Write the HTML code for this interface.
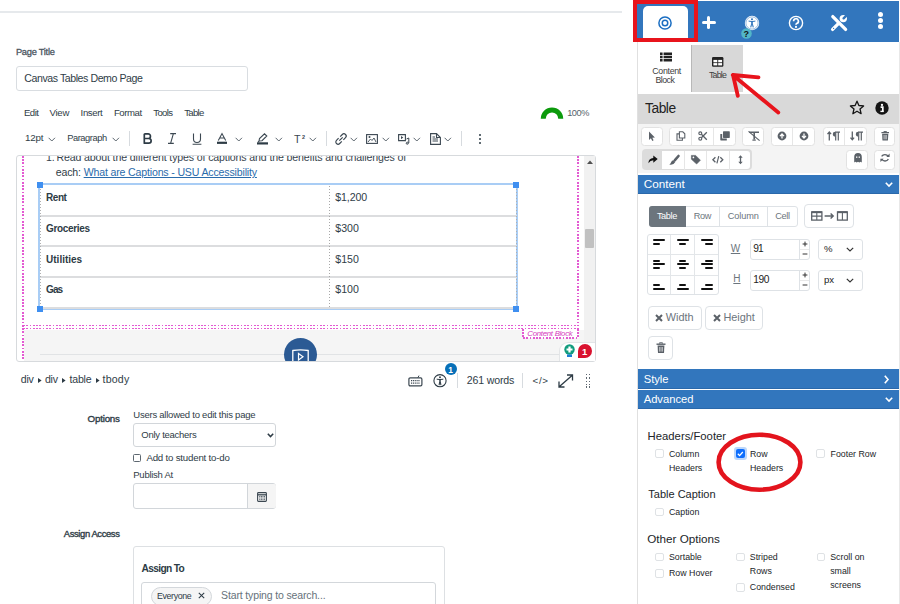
<!DOCTYPE html>
<html><head><meta charset="utf-8"><style>
html,body{margin:0;padding:0;}
body{width:900px;height:604px;position:relative;overflow:hidden;background:#fff;font-family:"Liberation Sans",sans-serif;}
.a{position:absolute;}
.t{position:absolute;white-space:nowrap;line-height:1;}
svg.a{overflow:visible;}
</style></head><body>
<div class="a" style="left:0px;top:11px;width:622.00px;height:2.00px;background:#e6e9ec"></div>
<div class="t" style="left:15.90px;top:48.00px;font-size:9.3px;color:#4b565f;font-weight:400;-webkit-text-stroke:0.3px #4b565f;letter-spacing:-0.262px;">Page Title</div>
<div class="a" style="left:15.5px;top:66.3px;width:232.50px;height:24.70px;border:1px solid #d9dde1;border-radius:3px;box-sizing:border-box"></div>
<div class="t" style="left:24.30px;top:73.00px;font-size:10.6px;color:#303d47;font-weight:400;;letter-spacing:-0.435px;">Canvas Tables Demo Page</div>
<div class="t" style="left:23.90px;top:108.00px;font-size:9.6px;color:#303d47;font-weight:400;;letter-spacing:-0.481px;">Edit</div>
<div class="t" style="left:49.40px;top:108.00px;font-size:9.6px;color:#303d47;font-weight:400;;letter-spacing:-0.212px;">View</div>
<div class="t" style="left:80.60px;top:108.00px;font-size:9.6px;color:#303d47;font-weight:400;;letter-spacing:-0.362px;">Insert</div>
<div class="t" style="left:113.90px;top:108.00px;font-size:9.6px;color:#303d47;font-weight:400;;letter-spacing:-0.441px;">Format</div>
<div class="t" style="left:153.20px;top:108.00px;font-size:9.6px;color:#303d47;font-weight:400;;letter-spacing:-0.603px;">Tools</div>
<div class="t" style="left:184.30px;top:108.00px;font-size:9.6px;color:#303d47;font-weight:400;;letter-spacing:-0.738px;">Table</div>
<svg class="a" style="left:540px;top:107.4px;" width="24" height="13" viewBox="0 0 24 13"><path d="M3.25 11.7 A8.75 8.75 0 0 1 20.75 11.7" fill="none" stroke="#0c9a0c" stroke-width="5"/></svg>
<div class="t" style="left:567.20px;top:109.00px;font-size:9.2px;color:#56616b;font-weight:400;;letter-spacing:-0.443px;">100%</div>
<div class="t" style="left:25.00px;top:133.00px;font-size:9.8px;color:#303d47;font-weight:400;;letter-spacing:-0.225px;">12pt</div>
<svg class="a" style="left:48px;top:136.5px;" width="8" height="5" viewBox="0 0 8 5"><path d="M0.6 0.8 L3.8 4 L7 0.8" fill="none" stroke="#5d6770" stroke-width="1"/></svg>
<div class="t" style="left:67.20px;top:134.00px;font-size:9.3px;color:#303d47;font-weight:400;;letter-spacing:-0.429px;">Paragraph</div>
<svg class="a" style="left:111.5px;top:136.5px;" width="8" height="5" viewBox="0 0 8 5"><path d="M0.6 0.8 L3.8 4 L7 0.8" fill="none" stroke="#5d6770" stroke-width="1"/></svg>
<div class="a" style="left:129px;top:131px;width:1.00px;height:15.00px;background:#d7dbdf"></div>
<svg class="a" style="left:142.5px;top:133px;" width="10" height="11" viewBox="0 0 10 11"><path d="M1.3 0.8 V10.2 H5.8 A2.35 2.35 0 0 0 5.8 5.5 H1.3 M1.3 0.8 H5.1 A2.35 2.35 0 0 1 5.1 5.5" fill="none" stroke="#2d3b45" stroke-width="1.7" stroke-linejoin="round"/></svg>
<svg class="a" style="left:167px;top:133px;" width="10" height="11" viewBox="0 0 10 11"><path d="M3.2 0.6 H9 M1 10.4 H6.8 M6.4 0.6 L3.6 10.4" fill="none" stroke="#3c4852" stroke-width="1.1"/></svg>
<svg class="a" style="left:192px;top:132.5px;" width="10" height="12" viewBox="0 0 10 12"><path d="M1.5 0.5 V6 A3.5 3.5 0 0 0 8.5 6 V0.5 M0.6 11.3 H9.4" fill="none" stroke="#3c4852" stroke-width="1.1"/></svg>
<svg class="a" style="left:216.5px;top:133px;" width="10" height="11" viewBox="0 0 10 11"><path d="M1.3 7.5 L5 0.6 L8.7 7.5 M2.6 5 H7.4" fill="none" stroke="#3c4852" stroke-width="1.1"/><rect x="0" y="8.7" width="10" height="2.2" fill="#2d3b45"/></svg>
<svg class="a" style="left:235px;top:136.5px;" width="8" height="5" viewBox="0 0 8 5"><path d="M0.6 0.8 L3.8 4 L7 0.8" fill="none" stroke="#5d6770" stroke-width="1"/></svg>
<svg class="a" style="left:257px;top:132.5px;" width="11" height="12" viewBox="0 0 11 12"><path d="M2 8 L2.5 5.5 L7.5 0.8 L9.8 3 L5 7.7 Z M1 9.2 L2.2 8" fill="none" stroke="#3c4852" stroke-width="1.1"/><rect x="0" y="9.3" width="11" height="2.2" fill="#2d3b45"/></svg>
<svg class="a" style="left:275px;top:136.5px;" width="8" height="5" viewBox="0 0 8 5"><path d="M0.6 0.8 L3.8 4 L7 0.8" fill="none" stroke="#5d6770" stroke-width="1"/></svg>
<div class="t" style="left:293.90px;top:134.00px;font-size:10.8px;color:#3c4852;font-weight:400;">T</div>
<div class="t" style="left:302.00px;top:135.00px;font-size:5.5px;color:#3c4852;font-weight:700;">2</div>
<svg class="a" style="left:308.5px;top:136.5px;" width="8" height="5" viewBox="0 0 8 5"><path d="M0.6 0.8 L3.8 4 L7 0.8" fill="none" stroke="#5d6770" stroke-width="1"/></svg>
<div class="a" style="left:326px;top:131px;width:1.00px;height:15.00px;background:#d7dbdf"></div>
<svg class="a" style="left:334.5px;top:132.5px;" width="12" height="12" viewBox="0 0 12 12"><path d="M5.2 3.6 L7.3 1.5 A2.2 2.2 0 0 1 10.5 4.7 L8.4 6.8 M6.8 8.4 L4.7 10.5 A2.2 2.2 0 0 1 1.5 7.3 L3.6 5.2 M4.3 7.7 L7.7 4.3" fill="none" stroke="#3c4852" stroke-width="1.2"/></svg>
<svg class="a" style="left:350.3px;top:136.5px;" width="8" height="5" viewBox="0 0 8 5"><path d="M0.6 0.8 L3.8 4 L7 0.8" fill="none" stroke="#5d6770" stroke-width="1"/></svg>
<svg class="a" style="left:366px;top:133.5px;" width="12" height="10" viewBox="0 0 12 10"><rect x="0.6" y="0.6" width="10.8" height="8.8" fill="none" stroke="#3c4852" stroke-width="1.1"/><path d="M2 8 L4.5 5 L6 6.5 L8 4 L10 8" fill="none" stroke="#3c4852" stroke-width="0.9"/><circle cx="3.5" cy="3" r="1" fill="#3c4852"/></svg>
<svg class="a" style="left:381.5px;top:136.5px;" width="8" height="5" viewBox="0 0 8 5"><path d="M0.6 0.8 L3.8 4 L7 0.8" fill="none" stroke="#5d6770" stroke-width="1"/></svg>
<svg class="a" style="left:397.5px;top:134px;" width="12" height="10" viewBox="0 0 12 10"><path d="M0.6 0.6 H7.4 V6.6 H0.6 Z" fill="none" stroke="#3c4852" stroke-width="1.1"/><path d="M3 2 L5.3 3.6 L3 5.2 Z" fill="#3c4852"/><path d="M8.5 5 L10.8 4 V9 M8.5 8.5 A1 1 0 1 0 8.6 8.4" fill="none" stroke="#3c4852" stroke-width="1"/></svg>
<svg class="a" style="left:412.5px;top:136.5px;" width="8" height="5" viewBox="0 0 8 5"><path d="M0.6 0.8 L3.8 4 L7 0.8" fill="none" stroke="#5d6770" stroke-width="1"/></svg>
<svg class="a" style="left:429.5px;top:132.5px;" width="11" height="12" viewBox="0 0 11 12"><path d="M0.6 0.6 H6.5 L10.4 4.5 V11.4 H0.6 Z M6.5 0.6 V4.5 H10.4" fill="none" stroke="#3c4852" stroke-width="1.1"/><path d="M2.5 4 H5 M2.5 6 H8 M2.5 8 H8" stroke="#3c4852" stroke-width="1"/></svg>
<svg class="a" style="left:443.5px;top:136.5px;" width="8" height="5" viewBox="0 0 8 5"><path d="M0.6 0.8 L3.8 4 L7 0.8" fill="none" stroke="#5d6770" stroke-width="1"/></svg>
<div class="a" style="left:461px;top:131px;width:1.00px;height:15.00px;background:#d7dbdf"></div>
<div class="a" style="left:478.6px;top:133.70000000000002px;width:2.20px;height:2.20px;background:#2d3b45;border-radius:50%"></div>
<div class="a" style="left:478.6px;top:137.70000000000002px;width:2.20px;height:2.20px;background:#2d3b45;border-radius:50%"></div>
<div class="a" style="left:478.6px;top:141.70000000000002px;width:2.20px;height:2.20px;background:#2d3b45;border-radius:50%"></div>
<div class="a" style="left:15.5px;top:155px;width:580.50px;height:207.00px;border:1px solid #d7dadd;border-radius:3px;box-sizing:border-box;background:#fff"></div>
<div class="a" style="left:24px;top:329.5px;width:560.00px;height:31.50px;background:#f5f5f5"></div>
<div class="a" style="left:40px;top:353.5px;width:519.00px;height:1.50px;background:#e1e3e5"></div>
<div class="a" style="left:24px;top:330px;width:560px;height:31px;overflow:hidden"><div class="a" style="left:260px;top:7.6px;width:33px;height:33px;border-radius:50%;background:#2b5a94"></div><svg class="a" style="left:268px;top:19px" width="17" height="14" viewBox="0 0 17 14"><path d="M0.8 13 V1.5 Q8.5 0.2 16.2 1.5 V13" fill="none" stroke="#fff" stroke-width="1.3"/><path d="M6.5 4.5 L11 7.8 L6.5 11 Z" fill="none" stroke="#fff" stroke-width="1.2"/></svg></div>
<div class="a" style="left:16px;top:156px;width:568px;height:30px;overflow:hidden"><div class="t" style="left:30px;top:-4px;font-size:10.6px;color:#36434d;letter-spacing:-0.2px">1.</div><div class="t" style="left:40.4px;top:-4px;font-size:10.6px;color:#36434d;letter-spacing:-0.138px">Read about the different types of captions and the benefits and challenges of</div></div>
<div class="t" style="left:55.80px;top:167.00px;font-size:10.6px;color:#303d47;font-weight:400;letter-spacing:-0.170px;">each: <span style="color:#2a6bab;text-decoration:underline">What are Captions - USU Accessibility</span></div>
<div class="a" style="left:38px;top:183.3px;width:480.00px;height:127.20px;border-top:2.2px solid #a9cdf5;border-bottom:2px solid #a9cdf5;border-left:2px solid #a9cdf5;border-right:2px solid #a9cdf5;box-sizing:border-box"></div>
<div class="a" style="left:40px;top:214.9px;width:476.50px;height:2.00px;background:#dcdddf"></div>
<div class="a" style="left:40px;top:245.3px;width:476.50px;height:2.00px;background:#dcdddf"></div>
<div class="a" style="left:40px;top:276px;width:476.50px;height:2.00px;background:#dcdddf"></div>
<div class="a" style="left:40px;top:307.4px;width:476.50px;height:2.00px;background:#dcdddf"></div>
<div class="a" style="left:40px;top:185.5px;width:1.00px;height:122.50px;background:repeating-linear-gradient(#b0b0b0 0 1.2px,transparent 1.2px 3px)"></div>
<div class="a" style="left:515.5px;top:185.5px;width:1.00px;height:122.50px;background:repeating-linear-gradient(#b0b0b0 0 1.2px,transparent 1.2px 3px)"></div>
<div class="a" style="left:329px;top:185.5px;width:1.00px;height:122.50px;background:repeating-linear-gradient(#a8a8a8 0 1.3px,transparent 1.3px 3px)"></div>
<div class="a" style="left:36.5px;top:182px;width:6.30px;height:6.20px;background:#3f8ff0"></div>
<div class="a" style="left:513px;top:182px;width:6.30px;height:6.20px;background:#3f8ff0"></div>
<div class="a" style="left:36.5px;top:305.7px;width:6.30px;height:6.20px;background:#3f8ff0"></div>
<div class="a" style="left:513px;top:305.7px;width:6.30px;height:6.20px;background:#3f8ff0"></div>
<div class="t" style="left:46.10px;top:193.00px;font-size:10.0px;color:#2d3b45;font-weight:700;;letter-spacing:-0.474px;">Rent</div>
<div class="t" style="left:335.30px;top:192.00px;font-size:10.6px;color:#303d47;font-weight:400;;letter-spacing:-0.104px;">$1,200</div>
<div class="t" style="left:46.10px;top:224.00px;font-size:10.0px;color:#2d3b45;font-weight:700;;letter-spacing:-0.349px;">Groceries</div>
<div class="t" style="left:335.30px;top:223.00px;font-size:10.6px;color:#303d47;font-weight:400;;letter-spacing:-0.027px;">$300</div>
<div class="t" style="left:46.10px;top:255.00px;font-size:10.0px;color:#2d3b45;font-weight:700;;letter-spacing:-0.015px;">Utilities</div>
<div class="t" style="left:335.30px;top:254.00px;font-size:10.6px;color:#303d47;font-weight:400;;letter-spacing:-0.027px;">$150</div>
<div class="t" style="left:46.10px;top:285.00px;font-size:10.0px;color:#2d3b45;font-weight:700;;letter-spacing:-0.951px;">Gas</div>
<div class="t" style="left:335.30px;top:284.00px;font-size:10.6px;color:#303d47;font-weight:400;;letter-spacing:-0.027px;">$100</div>
<div class="a" style="left:22px;top:156px;width:2.00px;height:205.00px;background:repeating-linear-gradient(#e35ad2 0 1.7px,transparent 1.7px 3.25px)"></div>
<div class="a" style="left:577px;top:156px;width:2.00px;height:170.20px;background:repeating-linear-gradient(#e35ad2 0 1.7px,transparent 1.7px 3.25px)"></div>
<div class="a" style="left:23px;top:324.7px;width:555.50px;height:1.40px;background:repeating-linear-gradient(90deg,#e35ad2 0 1.7px,transparent 1.7px 3.3px)"></div>
<div class="a" style="left:23px;top:327.9px;width:555.50px;height:1.40px;background:repeating-linear-gradient(90deg,#e35ad2 0 1.7px,transparent 1.7px 3.3px)"></div>
<div class="a" style="left:523px;top:329.3px;width:55.50px;height:9.20px;background:#fff"></div>
<div class="a" style="left:523px;top:337.2px;width:55.50px;height:1.40px;background:repeating-linear-gradient(90deg,#e35ad2 0 1.7px,transparent 1.7px 3.3px)"></div>
<div class="a" style="left:522.4px;top:328.5px;width:1.80px;height:10.30px;background:repeating-linear-gradient(#e35ad2 0 1.7px,transparent 1.7px 3.25px)"></div>
<div class="a" style="left:577px;top:328.5px;width:2.00px;height:10.30px;background:repeating-linear-gradient(#e35ad2 0 1.7px,transparent 1.7px 3.25px)"></div>
<div class="t" style="left:527.30px;top:330.00px;font-size:7.8px;color:#d43cbc;font-weight:400;font-style:italic;letter-spacing:-0.263px;">Content Block</div>
<div class="a" style="left:584px;top:156px;width:11.00px;height:205.00px;background:#f1f1f1"></div>
<svg class="a" style="left:586.5px;top:160px;" width="6" height="4" viewBox="0 0 6 4"><path d="M0 4 L3 0.5 L6 4 Z" fill="#505050"/></svg>
<div class="a" style="left:585.2px;top:228.7px;width:8.60px;height:19.30px;background:#c1c1c1;border-radius:1px"></div>
<div class="a" style="left:559.4px;top:341.7px;width:35.60px;height:19.80px;background:#fff;border:1px solid #e3e5e7;border-right:none;border-bottom:none;border-radius:9px 0 0 0;box-sizing:border-box"></div>
<svg class="a" style="left:563.5px;top:344px;" width="12" height="14" viewBox="0 0 12 14"><circle cx="5.5" cy="5.5" r="5.2" fill="#129c7e"/><path d="M5.5 2.5 V8.5 M2.5 5.5 H8.5" stroke="#fff" stroke-width="2.2"/><rect x="3" y="10.5" width="5" height="2.5" fill="#1c7ed6"/></svg>
<div class="a" style="left:578.2px;top:344px;width:14.2px;height:14.2px;background:#d9122f;border-radius:7.1px 7.1px 7.1px 0"></div>
<div class="t" style="left:582.00px;top:347.00px;font-size:9.5px;color:#fff;font-weight:700;">1</div>
<div class="t" style="left:20.80px;top:374.00px;font-size:10.6px;color:#303d47;font-weight:400;;letter-spacing:-0.275px;">div</div>
<div class="t" style="left:45.00px;top:374.00px;font-size:10.6px;color:#303d47;font-weight:400;;letter-spacing:-0.275px;">div</div>
<div class="t" style="left:69.50px;top:374.00px;font-size:10.6px;color:#303d47;font-weight:400;;letter-spacing:-0.222px;">table</div>
<div class="t" style="left:102.50px;top:374.00px;font-size:10.6px;color:#303d47;font-weight:400;;letter-spacing:0.192px;">tbody</div>
<svg class="a" style="left:38.2px;top:377.8px;" width="4" height="5" viewBox="0 0 4 5"><path d="M0 0 L3.6 2.5 L0 5 Z" fill="#2d3b45"/></svg>
<svg class="a" style="left:62.2px;top:377.8px;" width="4" height="5" viewBox="0 0 4 5"><path d="M0 0 L3.6 2.5 L0 5 Z" fill="#2d3b45"/></svg>
<svg class="a" style="left:95.5px;top:377.8px;" width="4" height="5" viewBox="0 0 4 5"><path d="M0 0 L3.6 2.5 L0 5 Z" fill="#2d3b45"/></svg>
<svg class="a" style="left:407.5px;top:374px;" width="15" height="13" viewBox="0 0 15 13"><rect x="0.9" y="3.9" width="13" height="8" rx="1.3" fill="none" stroke="#3c4852" stroke-width="1.2"/><path d="M9.8 3.8 L11 1.6" stroke="#3c4852" stroke-width="1"/><path d="M3 6.6 H12 M3 9.1 H12" stroke="#3c4852" stroke-width="1.1" stroke-dasharray="1.1 0.75"/></svg>
<svg class="a" style="left:433px;top:373.8px;" width="14" height="14" viewBox="0 0 14 14"><circle cx="7" cy="6.7" r="6.1" fill="none" stroke="#2d3b45" stroke-width="1.1"/><circle cx="7" cy="3.3" r="0.95" fill="#2d3b45"/><path d="M3.7 5.2 Q7 5.9 10.3 5.2" fill="none" stroke="#2d3b45" stroke-width="1"/><path d="M7 5.4 V8.4" stroke="#2d3b45" stroke-width="1.5"/><path d="M6.6 8.2 L6.1 11.2 M7.4 8.2 L7.9 11.2" stroke="#2d3b45" stroke-width="1.05"/></svg>
<div class="a" style="left:444.7px;top:362.7px;width:12.80px;height:12.80px;background:#0770b8;border-radius:50%"></div>
<div class="t" style="left:448.30px;top:366.00px;font-size:8.4px;color:#fff;font-weight:700;">1</div>
<div class="a" style="left:457.2px;top:373.3px;width:1.00px;height:14.30px;background:#d7dbdf"></div>
<div class="t" style="left:466.70px;top:375.00px;font-size:10.6px;color:#303d47;font-weight:400;;letter-spacing:-0.151px;">261 words</div>
<div class="a" style="left:522.3px;top:373.3px;width:1.00px;height:14.30px;background:#d7dbdf"></div>
<div class="t" style="left:532.50px;top:376.00px;font-size:9.8px;color:#303d47;font-weight:400;;letter-spacing:0.666px;">&lt;/&gt;</div>
<svg class="a" style="left:558px;top:373.5px;" width="15.5" height="14" viewBox="0 0 15.5 14"><path d="M1.2 12.8 L14.3 1.2 M1 7.5 V13 H6.5 M9 1 H14.5 V6.5" fill="none" stroke="#2d3b45" stroke-width="1.3"/></svg>
<div class="a" style="left:585.8px;top:374.2px;width:1.30px;height:1.30px;background:#5d6770"></div>
<div class="a" style="left:588.8px;top:374.2px;width:1.30px;height:1.30px;background:#5d6770"></div>
<div class="a" style="left:585.8px;top:377.4px;width:1.30px;height:1.30px;background:#5d6770"></div>
<div class="a" style="left:588.8px;top:377.4px;width:1.30px;height:1.30px;background:#5d6770"></div>
<div class="a" style="left:585.8px;top:380.59999999999997px;width:1.30px;height:1.30px;background:#5d6770"></div>
<div class="a" style="left:588.8px;top:380.59999999999997px;width:1.30px;height:1.30px;background:#5d6770"></div>
<div class="a" style="left:585.8px;top:383.79999999999995px;width:1.30px;height:1.30px;background:#5d6770"></div>
<div class="a" style="left:588.8px;top:383.79999999999995px;width:1.30px;height:1.30px;background:#5d6770"></div>
<div class="a" style="left:585.8px;top:386.4px;width:1.30px;height:1.30px;background:#5d6770"></div>
<div class="a" style="left:588.8px;top:386.4px;width:1.30px;height:1.30px;background:#5d6770"></div>
<div class="t" style="left:87.60px;top:414.00px;font-size:9.8px;color:#2d3b45;font-weight:400;-webkit-text-stroke:0.35px #2d3b45;letter-spacing:-0.229px;">Options</div>
<div class="t" style="left:133.30px;top:410.00px;font-size:9.5px;color:#303d47;font-weight:400;;letter-spacing:-0.239px;">Users allowed to edit this page</div>
<div class="a" style="left:133.3px;top:423.1px;width:142.70px;height:24.20px;border:1px solid #d2d6da;border-radius:3px;box-sizing:border-box;background:#fff"></div>
<div class="t" style="left:141.30px;top:430.00px;font-size:9.5px;color:#2d3b45;font-weight:400;;letter-spacing:-0.268px;">Only teachers</div>
<svg class="a" style="left:266.5px;top:432.5px;" width="7" height="5" viewBox="0 0 7 5"><path d="M0.8 0.8 L3.5 3.6 L6.2 0.8" fill="none" stroke="#2d3b45" stroke-width="1.5"/></svg>
<div class="a" style="left:133.3px;top:453.7px;width:8.20px;height:8.00px;border:1px solid #5d6770;border-radius:1.5px;box-sizing:border-box"></div>
<div class="t" style="left:146.40px;top:453.00px;font-size:9.7px;color:#2d3b45;font-weight:400;;letter-spacing:-0.198px;">Add to student to-do</div>
<div class="t" style="left:133.30px;top:470.00px;font-size:9.5px;color:#303d47;font-weight:400;;letter-spacing:-0.261px;">Publish At</div>
<div class="a" style="left:133.3px;top:482.8px;width:142.70px;height:25.80px;border:1px solid #d2d6da;border-radius:3px;box-sizing:border-box;background:#fff"></div>
<div class="a" style="left:246.5px;top:483.8px;width:28.50px;height:23.80px;background:#f5f5f5;border-left:1px solid #d2d6da;border-radius:0 2px 2px 0"></div>
<svg class="a" style="left:256.5px;top:490.5px;" width="10" height="11" viewBox="0 0 10 11"><rect x="0.6" y="1.6" width="8.8" height="8.8" rx="0.8" fill="none" stroke="#3c4852" stroke-width="1.1"/><path d="M0.6 3.8 H9.4" stroke="#3c4852" stroke-width="1.3"/><path d="M2.3 5.5 H8 M2.3 7 H8 M2.3 8.6 H8" stroke="#3c4852" stroke-width="0.9" stroke-dasharray="1 0.6"/></svg>
<div class="t" style="left:63.80px;top:529.00px;font-size:9.4px;color:#2d3b45;font-weight:400;-webkit-text-stroke:0.35px #2d3b45;letter-spacing:-0.367px;">Assign Access</div>
<div class="a" style="left:133.3px;top:546.4px;width:311.50px;height:73.60px;border:1px solid #dde0e3;border-radius:3px;box-sizing:border-box;background:#fff"></div>
<div class="t" style="left:141.60px;top:564.00px;font-size:10.2px;color:#2d3b45;font-weight:700;;letter-spacing:-0.656px;">Assign To</div>
<div class="a" style="left:141.4px;top:582.4px;width:294.50px;height:37.60px;border:1px solid #d3d7db;border-radius:3px;box-sizing:border-box;background:#fff"></div>
<div class="a" style="left:151.1px;top:587.2px;width:60.70px;height:19.30px;border:1px solid #d3d7db;border-radius:9.5px;box-sizing:border-box;background:#f5f5f5"></div>
<div class="t" style="left:157.10px;top:592.00px;font-size:8.8px;color:#2d3b45;font-weight:400;;letter-spacing:-0.383px;">Everyone</div>
<svg class="a" style="left:197.8px;top:592.2px;" width="7" height="7" viewBox="0 0 7 7"><path d="M0.8 0.8 L6.2 6.2 M6.2 0.8 L0.8 6.2" stroke="#2d3b45" stroke-width="1.05"/></svg>
<div class="t" style="left:221.10px;top:590.00px;font-size:10.5px;color:#66727b;font-weight:400;;letter-spacing:-0.145px;">Start typing to search...</div>
<div class="a" style="left:637px;top:42px;width:1.00px;height:562.00px;background:#e0e0e0"></div>
<div class="a" style="left:898.6px;top:42px;width:1.00px;height:562.00px;background:#e8e8e8"></div>
<div class="a" style="left:637px;top:1px;width:261.60px;height:41.00px;background:#3276bd"></div>
<div class="a" style="left:643px;top:5.5px;width:45.00px;height:36.50px;background:#fff;border-radius:5px 5px 0 0"></div>
<svg class="a" style="left:657px;top:14.5px;" width="16" height="16" viewBox="0 0 16 16"><circle cx="8" cy="8" r="6.1" fill="none" stroke="#1b6ec2" stroke-width="1.5"/><circle cx="8" cy="8" r="2.75" fill="none" stroke="#1b6ec2" stroke-width="1.5"/></svg>
<div class="a" style="left:702px;top:20.9px;width:13.50px;height:3.20px;background:#fff;border-radius:1.5px"></div>
<div class="a" style="left:707.2px;top:16px;width:3.20px;height:13.00px;background:#fff;border-radius:1.5px"></div>
<svg class="a" style="left:744px;top:14.5px;" width="16" height="16" viewBox="0 0 16 16"><circle cx="8" cy="8" r="7.2" fill="#fff"/><circle cx="8" cy="8" r="6.1" fill="none" stroke="#3276bd" stroke-width="0.5"/><circle cx="8" cy="4.3" r="1.05" fill="#3276bd"/><path d="M4.6 6.1 Q8 7 11.4 6.1" fill="none" stroke="#3276bd" stroke-width="1"/><path d="M8 6.6 V9.4" stroke="#3276bd" stroke-width="1.7"/><path d="M7.6 9.2 L6.7 12.4 M8.4 9.2 L9.3 12.4" fill="none" stroke="#3276bd" stroke-width="1.1"/></svg>
<svg class="a" style="left:740.5px;top:28px;" width="11" height="11" viewBox="0 0 11 11"><circle cx="5.5" cy="5.5" r="5.3" fill="#52b6c8"/></svg>
<div class="t" style="left:743.40px;top:30.00px;font-size:9px;color:#111;font-weight:700;">?</div>
<svg class="a" style="left:788px;top:14.5px;" width="16" height="16" viewBox="0 0 16 16"><circle cx="8" cy="8" r="6.6" fill="none" stroke="#fff" stroke-width="1.4"/><path d="M5.6 6.2 A2.4 2.4 0 1 1 8.8 8.4 Q8 8.8 8 9.8" fill="none" stroke="#fff" stroke-width="1.7"/><circle cx="8" cy="11.9" r="1.05" fill="#fff"/></svg>
<svg class="a" style="left:830px;top:14px;" width="18" height="18" viewBox="0 0 18 18"><path d="M2.8 2.6 L15.6 15.4" stroke="#fff" stroke-width="3.3" stroke-linecap="round"/><path d="M2.6 15.4 L8.6 9.4" stroke="#fff" stroke-width="3.3" stroke-linecap="round"/><circle cx="13.3" cy="4.6" r="3.7" fill="#fff"/><path d="M13.6 4.3 L17.5 0.4" stroke="#3276bd" stroke-width="2.4" stroke-linecap="round"/><circle cx="3.6" cy="14.4" r="0.6" fill="#3276bd"/></svg>
<div class="a" style="left:877.7px;top:12.0px;width:5.00px;height:5.00px;background:#fff;border-radius:50%"></div>
<div class="a" style="left:877.7px;top:18.0px;width:5.00px;height:5.00px;background:#fff;border-radius:50%"></div>
<div class="a" style="left:877.7px;top:24.0px;width:5.00px;height:5.00px;background:#fff;border-radius:50%"></div>
<div class="a" style="left:633px;top:0px;width:65.00px;height:42.00px;border:4.5px solid #e8141c;box-sizing:border-box"></div>
<div class="a" style="left:691.3px;top:45px;width:51.40px;height:46.60px;background:#d8d8d8;border-left:1.2px solid #b8b8b8;box-sizing:border-box"></div>
<svg class="a" style="left:660px;top:52px;" width="12" height="10" viewBox="0 0 12 10"><path d="M0 0.5 H2.6 V2.9 H0 Z M0 3.8 H2.6 V6.2 H0 Z M0 7.1 H2.6 V9.5 H0 Z M3.6 0.5 H12 V2.9 H3.6 Z M3.6 3.8 H12 V6.2 H3.6 Z M3.6 7.1 H12 V9.5 H3.6 Z" fill="#222"/></svg>
<div class="t" style="left:652.30px;top:67.00px;font-size:8.8px;color:#3d3d3d;font-weight:400;;letter-spacing:-0.304px;">Content</div>
<div class="t" style="left:655.50px;top:76.00px;font-size:8.8px;color:#3d3d3d;font-weight:400;;letter-spacing:-0.530px;">Block</div>
<svg class="a" style="left:712px;top:56.6px;" width="11.4" height="9.8" viewBox="0 0 11.4 9.8"><rect x="0" y="0" width="11.4" height="9.8" rx="1.2" fill="#222"/><rect x="1.4" y="2.9" width="3.9" height="2.4" fill="#fff"/><rect x="6.2" y="2.9" width="3.9" height="2.4" fill="#fff"/><rect x="1.4" y="6.1" width="3.9" height="2.3" fill="#fff"/><rect x="6.2" y="6.1" width="3.9" height="2.3" fill="#fff"/></svg>
<div class="t" style="left:708.90px;top:71.00px;font-size:8.8px;color:#3d3d3d;font-weight:400;;letter-spacing:-0.760px;">Table</div>
<div class="a" style="left:638px;top:94px;width:260.60px;height:29.80px;background:#d9d9d9"></div>
<div class="t" style="left:645.10px;top:102.00px;font-size:13.8px;color:#222;font-weight:400;;letter-spacing:-0.498px;">Table</div>
<svg class="a" style="left:849px;top:100px;" width="16" height="15" viewBox="0 0 16 15"><path d="M8 1.2 L9.9 5.5 L14.6 5.9 L11 9 L12.1 13.7 L8 11.2 L3.9 13.7 L5 9 L1.4 5.9 L6.1 5.5 Z" fill="none" stroke="#151515" stroke-width="1.3" stroke-linejoin="round"/></svg>
<svg class="a" style="left:874.8px;top:100.5px;" width="14" height="14" viewBox="0 0 14 14"><circle cx="7" cy="7" r="6.7" fill="#151515"/><circle cx="7" cy="3.9" r="1.15" fill="#fff"/><path d="M5.6 6.1 H7.8 V10.2" fill="none" stroke="#fff" stroke-width="1.7"/><path d="M5.4 10.4 H8.8" stroke="#fff" stroke-width="1.4"/></svg>
<div class="a" style="left:638px;top:123.8px;width:260.60px;height:49.20px;background:#f4f4f4"></div>
<div class="a" style="left:641px;top:126.5px;width:22.00px;height:19.90px;background:#fff;border:1px solid #e2e2e2;border-radius:3.5px;box-sizing:border-box"></div>
<div class="a" style="left:669.4px;top:126.5px;width:66.70px;height:19.90px;background:#fff;border:1px solid #e2e2e2;border-radius:3.5px;box-sizing:border-box"></div>
<div class="a" style="left:691.1333333333333px;top:127.5px;width:1.00px;height:17.90px;background:#e6e6e6"></div>
<div class="a" style="left:713.3666666666667px;top:127.5px;width:1.00px;height:17.90px;background:#e6e6e6"></div>
<div class="a" style="left:742.4px;top:126.5px;width:21.60px;height:19.90px;background:#fff;border:1px solid #e2e2e2;border-radius:3.5px;box-sizing:border-box"></div>
<div class="a" style="left:770.6px;top:126.5px;width:44.10px;height:19.90px;background:#fff;border:1px solid #e2e2e2;border-radius:3.5px;box-sizing:border-box"></div>
<div class="a" style="left:792.1500000000001px;top:127.5px;width:1.00px;height:17.90px;background:#e6e6e6"></div>
<div class="a" style="left:822.5px;top:126.5px;width:44.50px;height:19.90px;background:#fff;border:1px solid #e2e2e2;border-radius:3.5px;box-sizing:border-box"></div>
<div class="a" style="left:844.25px;top:127.5px;width:1.00px;height:17.90px;background:#e6e6e6"></div>
<div class="a" style="left:873.5px;top:126.5px;width:21.80px;height:19.90px;background:#fff;border:1px solid #e2e2e2;border-radius:3.5px;box-sizing:border-box"></div>
<div class="a" style="left:642px;top:149.3px;width:109.70px;height:20.90px;background:#dcdcdc;border-radius:4px"></div>
<div class="a" style="left:662px;top:150.6px;width:88.40px;height:18.30px;background:#fff;border-radius:0 3px 3px 0"></div>
<div class="a" style="left:683.8px;top:150.5px;width:1.00px;height:19.80px;background:#e6e6e6"></div>
<div class="a" style="left:705.9px;top:150.5px;width:1.00px;height:19.80px;background:#e6e6e6"></div>
<div class="a" style="left:728.5px;top:150.5px;width:1.00px;height:19.80px;background:#e6e6e6"></div>
<div class="a" style="left:845.5px;top:149.5px;width:22.10px;height:20.30px;background:#fff;border:1px solid #e2e2e2;border-radius:3.5px;box-sizing:border-box"></div>
<div class="a" style="left:873.5px;top:149.5px;width:21.80px;height:20.30px;background:#fff;border:1px solid #e2e2e2;border-radius:3.5px;box-sizing:border-box"></div>
<svg class="a" style="left:648px;top:130.5px;" width="8" height="10" viewBox="0 0 8 10"><path d="M1 0.6 V9 L2.9 7.3 L4.3 9.9 L5.6 9.3 L4.3 6.8 L6.9 6.6 Z" fill="#5b6168"/></svg>
<svg class="a" style="left:676px;top:130.5px;" width="10" height="10" viewBox="0 0 10 10"><path d="M3.4 0.8 H6.8 L8.8 2.8 V7 H3.4 Z" fill="none" stroke="#5b6168" stroke-width="1.1"/><path d="M3.3 2.9 H1 V9.2 H6.4 V7.1" fill="none" stroke="#5b6168" stroke-width="1.1"/></svg>
<svg class="a" style="left:698px;top:130.5px;" width="10" height="10" viewBox="0 0 10 10"><circle cx="2.3" cy="2.3" r="1.45" fill="none" stroke="#5b6168" stroke-width="1.2"/><circle cx="2.3" cy="7.7" r="1.45" fill="none" stroke="#5b6168" stroke-width="1.2"/><path d="M3.4 3.3 L8.8 8.8 M3.4 6.7 L8.8 1.2" stroke="#5b6168" stroke-width="1.3"/></svg>
<svg class="a" style="left:720px;top:130.5px;" width="10" height="10" viewBox="0 0 10 10"><rect x="3" y="0.3" width="6.8" height="6.6" rx="0.6" fill="#5b6168"/><path d="M0.3 3 H2.2 V7.6 H6.8 V9.4 H0.9 Q0.3 9.4 0.3 8.8 Z" fill="#5b6168"/></svg>
<svg class="a" style="left:747.5px;top:130.5px;" width="12" height="10" viewBox="0 0 12 10"><path d="M1.2 1.3 H11 M6.2 1.3 V8.4" stroke="#5b6168" stroke-width="1.6"/><path d="M4.4 9.1 H7.8" stroke="#5b6168" stroke-width="1.2"/><path d="M0.5 0.4 L11.6 9.6" stroke="#5b6168" stroke-width="1.2"/></svg>
<svg class="a" style="left:777px;top:130.7px;" width="10" height="10" viewBox="0 0 10 10"><circle cx="5" cy="5" r="4.4" fill="#5b6168"/><path d="M5 7.5 V3.1 M3 5.1 L5 3 L7 5.1" fill="none" stroke="#fff" stroke-width="1.3"/></svg>
<svg class="a" style="left:799.4px;top:130.7px;" width="10" height="10" viewBox="0 0 10 10"><circle cx="5" cy="5" r="4.4" fill="#5b6168"/><path d="M5 2.5 V6.9 M3 4.9 L5 7 L7 4.9" fill="none" stroke="#fff" stroke-width="1.3"/></svg>
<svg class="a" style="left:827px;top:130.5px;" width="14" height="10" viewBox="0 0 14 10"><path d="M2.3 9.4 V1.2 M0.5 3.2 L2.3 1 L4.1 3.2" fill="none" stroke="#5b6168" stroke-width="1.3"/><path d="M8.2 0.8 A2.45 2.45 0 0 0 8.2 5.7 Z" fill="#5b6168"/><path d="M8 1.1 H13 M8.7 0.9 V9.4 M11.3 0.9 V9.4" stroke="#5b6168" stroke-width="1.2"/></svg>
<svg class="a" style="left:849.5px;top:130.5px;" width="14" height="10" viewBox="0 0 14 10"><path d="M2.3 0.4 V8.6 M0.5 6.6 L2.3 8.8 L4.1 6.6" fill="none" stroke="#5b6168" stroke-width="1.3"/><path d="M8.2 0.8 A2.45 2.45 0 0 0 8.2 5.7 Z" fill="#5b6168"/><path d="M8 1.1 H13 M8.7 0.9 V9.4 M11.3 0.9 V9.4" stroke="#5b6168" stroke-width="1.2"/></svg>
<svg class="a" style="left:880.5px;top:130.5px;" width="8.5" height="10" viewBox="0 0 8.5 10"><path d="M0.4 1.6 H8" stroke="#5b6168" stroke-width="1.2"/><path d="M2.9 1.2 V0.5 H5.5 V1.2" fill="none" stroke="#5b6168" stroke-width="0.9"/><path d="M1.1 2.7 H7.3 L6.9 9.5 H1.5 Z" fill="#5b6168"/><path d="M3 4 V8.3 M4.2 4 V8.3 M5.4 4 V8.3" stroke="#fff" stroke-width="0.55"/></svg>
<svg class="a" style="left:647.5px;top:154.8px;" width="10" height="8.5" viewBox="0 0 10 8.5"><path d="M0.4 8.2 Q0.5 3.5 5.3 3.1 V0.4 L9.7 4.1 L5.3 7.8 V5.3 Q2.3 5.3 0.4 8.2 Z" fill="#111"/></svg>
<svg class="a" style="left:668.5px;top:154.5px;" width="10.5" height="10" viewBox="0 0 10.5 10"><path d="M9.5 1 L5.9 5.1" stroke="#5b6168" stroke-width="2.6" stroke-linecap="round"/><path d="M4.9 5.2 Q2.6 5.1 2.1 7.3 Q1.8 8.9 0.3 9.5 Q4.6 10.3 6.3 7.1 Z" fill="#5b6168"/></svg>
<svg class="a" style="left:690.7px;top:155.1px;" width="10" height="9" viewBox="0 0 10 9"><path d="M0.4 0.4 H4.6 L9.4 5.2 L5.6 9 L0.4 4.2 Z" fill="#5b6168" stroke="#5b6168" stroke-width="0.6" stroke-linejoin="round"/><circle cx="2.4" cy="2.4" r="0.85" fill="#fff"/></svg>
<svg class="a" style="left:712px;top:155.8px;" width="12" height="8" viewBox="0 0 12 8"><path d="M3.4 1.2 L0.9 3.7 L3.4 6.2 M8.3 1.2 L10.8 3.7 L8.3 6.2" fill="none" stroke="#5b6168" stroke-width="1.3"/><path d="M6.8 0.2 L4.9 7.3" stroke="#5b6168" stroke-width="1.2"/></svg>
<svg class="a" style="left:737.5px;top:154.5px;" width="5" height="9.5" viewBox="0 0 5 9.5"><path d="M2.5 1.5 V8" stroke="#5b6168" stroke-width="1.3"/><path d="M0.3 2.7 L2.5 0.2 L4.7 2.7 Z M0.3 6.8 L2.5 9.3 L4.7 6.8 Z" fill="#5b6168"/></svg>
<svg class="a" style="left:853.5px;top:153.2px;" width="8" height="10" viewBox="0 0 8 10"><path d="M0.2 9.6 V3.9 A3.8 3.8 0 0 1 7.8 3.9 V9.6 L6.6 8.7 L5.3 9.6 L4 8.7 L2.7 9.6 L1.4 8.7 Z" fill="#5b6168"/><rect x="2.2" y="3.4" width="1.1" height="1.6" fill="#fff"/><rect x="4.7" y="3.4" width="1.1" height="1.6" fill="#fff"/></svg>
<svg class="a" style="left:879.5px;top:153.3px;" width="10" height="9.6" viewBox="0 0 10 9.6"><path d="M8.3 3.6 A3.9 3.9 0 0 0 1.6 3.4 M1.7 6 A3.9 3.9 0 0 0 8.4 6.2" fill="none" stroke="#5b6168" stroke-width="1.3"/><path d="M6.3 3.9 H9.6 V0.6 Z M3.7 5.7 H0.4 V9 Z" fill="#5b6168"/></svg>
<div class="a" style="left:638px;top:174.5px;width:260.60px;height:19.50px;background:#3276bd;border-bottom:1px solid #2a68aa;box-sizing:border-box"></div>
<div class="t" style="left:643.80px;top:178.00px;font-size:11.7px;color:#fff;font-weight:400;">Content</div>
<svg class="a" style="left:885px;top:182px;" width="8" height="5" viewBox="0 0 8 5"><path d="M0.8 0.8 L4 4 L7.2 0.8" fill="none" stroke="#fff" stroke-width="1.6"/></svg>
<div class="a" style="left:649.1px;top:205.5px;width:149.40px;height:21.70px;border:1px solid #dee2e6;border-radius:3px;box-sizing:border-box;background:#fff"></div>
<div class="a" style="left:649.1px;top:205.5px;width:36.70px;height:21.70px;background:#6c757d;border-radius:3px 0 0 3px"></div>
<div class="a" style="left:719.3px;top:206.5px;width:1.00px;height:19.70px;background:#dee2e6"></div>
<div class="a" style="left:767.2px;top:206.5px;width:1.00px;height:19.70px;background:#dee2e6"></div>
<div class="t" style="left:656.90px;top:212.00px;font-size:9.2px;color:#fff;font-weight:400;;letter-spacing:-0.374px;">Table</div>
<div class="t" style="left:693.80px;top:212.00px;font-size:9.2px;color:#6c757d;font-weight:400;;letter-spacing:-0.453px;">Row</div>
<div class="t" style="left:727.80px;top:212.00px;font-size:9.2px;color:#6c757d;font-weight:400;;letter-spacing:-0.141px;">Column</div>
<div class="t" style="left:775.20px;top:212.00px;font-size:9.2px;color:#6c757d;font-weight:400;;letter-spacing:-0.283px;">Cell</div>
<div class="a" style="left:803.5px;top:204.2px;width:50.80px;height:24.10px;border:1px solid #dee2e6;border-radius:4px;box-sizing:border-box;background:#fff"></div>
<svg class="a" style="left:810.5px;top:210.8px;" width="38" height="10" viewBox="0 0 38 10"><rect x="0.7" y="0.9" width="10.2" height="8.2" fill="none" stroke="#5b6168" stroke-width="1.3"/><path d="M0.7 1.2 H10.9" stroke="#5b6168" stroke-width="1.9"/><path d="M0.7 5.1 H10.9 M5.8 0.9 V9.1" stroke="#5b6168" stroke-width="1.1"/><path d="M13.6 5 H22 M19.6 2.6 L22.2 5 L19.6 7.4" fill="none" stroke="#5b6168" stroke-width="1.4"/><rect x="26.5" y="0.9" width="9.8" height="8.2" fill="none" stroke="#5b6168" stroke-width="1.3"/><path d="M26.5 1.2 H36.3" stroke="#5b6168" stroke-width="1.9"/><path d="M31.4 0.9 V9.1" stroke="#5b6168" stroke-width="1.1"/></svg>
<div class="a" style="left:646.6px;top:234px;width:72.20px;height:61.20px;border:1px solid #dee2e6;border-radius:3px;box-sizing:border-box;background:#fff"></div>
<div class="a" style="left:670.2px;top:235px;width:1.00px;height:59.20px;background:#e3e6e9"></div>
<div class="a" style="left:694.1px;top:235px;width:1.00px;height:59.20px;background:#e3e6e9"></div>
<div class="a" style="left:647.6px;top:253.9px;width:70.20px;height:1.00px;background:#e3e6e9"></div>
<div class="a" style="left:647.6px;top:274.8px;width:70.20px;height:1.00px;background:#e3e6e9"></div>
<div class="a" style="left:652.6999999999999px;top:239.3px;width:12.20px;height:2.00px;background:#111;border-radius:1px"></div>
<div class="a" style="left:652.6999999999999px;top:243.2px;width:7.80px;height:2.00px;background:#111;border-radius:1px"></div>
<div class="a" style="left:652.6999999999999px;top:259.5px;width:7.80px;height:2.00px;background:#111;border-radius:1px"></div>
<div class="a" style="left:652.6999999999999px;top:263.3px;width:12.20px;height:2.00px;background:#111;border-radius:1px"></div>
<div class="a" style="left:652.6999999999999px;top:267.2px;width:7.80px;height:2.00px;background:#111;border-radius:1px"></div>
<div class="a" style="left:652.6999999999999px;top:284px;width:7.80px;height:2.00px;background:#111;border-radius:1px"></div>
<div class="a" style="left:652.6999999999999px;top:287.8px;width:12.20px;height:2.00px;background:#111;border-radius:1px"></div>
<div class="a" style="left:676.5px;top:239.3px;width:12.20px;height:2.00px;background:#111;border-radius:1px"></div>
<div class="a" style="left:678.7px;top:243.2px;width:7.80px;height:2.00px;background:#111;border-radius:1px"></div>
<div class="a" style="left:678.7px;top:259.5px;width:7.80px;height:2.00px;background:#111;border-radius:1px"></div>
<div class="a" style="left:676.5px;top:263.3px;width:12.20px;height:2.00px;background:#111;border-radius:1px"></div>
<div class="a" style="left:678.7px;top:267.2px;width:7.80px;height:2.00px;background:#111;border-radius:1px"></div>
<div class="a" style="left:678.7px;top:284px;width:7.80px;height:2.00px;background:#111;border-radius:1px"></div>
<div class="a" style="left:676.5px;top:287.8px;width:12.20px;height:2.00px;background:#111;border-radius:1px"></div>
<div class="a" style="left:700.5px;top:239.3px;width:12.20px;height:2.00px;background:#111;border-radius:1px"></div>
<div class="a" style="left:704.9000000000001px;top:243.2px;width:7.80px;height:2.00px;background:#111;border-radius:1px"></div>
<div class="a" style="left:704.9000000000001px;top:259.5px;width:7.80px;height:2.00px;background:#111;border-radius:1px"></div>
<div class="a" style="left:700.5px;top:263.3px;width:12.20px;height:2.00px;background:#111;border-radius:1px"></div>
<div class="a" style="left:704.9000000000001px;top:267.2px;width:7.80px;height:2.00px;background:#111;border-radius:1px"></div>
<div class="a" style="left:704.9000000000001px;top:284px;width:7.80px;height:2.00px;background:#111;border-radius:1px"></div>
<div class="a" style="left:700.5px;top:287.8px;width:12.20px;height:2.00px;background:#111;border-radius:1px"></div>
<div class="t" style="left:730.80px;top:244.00px;font-size:10px;color:#6c757d;font-weight:400;"><u>W</u></div>
<div class="t" style="left:733.30px;top:274.00px;font-size:10px;color:#6c757d;font-weight:400;"><u>H</u></div>
<div class="a" style="left:749.7px;top:239.2px;width:60.00px;height:20.50px;border:1px solid #dee2e6;border-radius:3px;box-sizing:border-box;background:#fff"></div>
<div class="a" style="left:799.2px;top:240.2px;width:1.00px;height:18.50px;background:#dee2e6"></div>
<div class="a" style="left:800.2px;top:249.2px;width:8.50px;height:1.00px;background:#e8e8e8"></div>
<svg class="a" style="left:801.5px;top:240.7px;" width="6" height="6" viewBox="0 0 6 6"><path d="M3 0.6 V5.4 M0.6 3 H5.4" stroke="#333" stroke-width="1"/></svg>
<svg class="a" style="left:801.5px;top:250.7px;" width="6" height="6" viewBox="0 0 6 6"><path d="M0.6 3 H5.4" stroke="#333" stroke-width="1"/></svg>
<div class="a" style="left:818px;top:239.2px;width:45.30px;height:20.50px;border:1px solid #dee2e6;border-radius:3px;box-sizing:border-box;background:#fff"></div>
<svg class="a" style="left:846px;top:247.2px;" width="8" height="5" viewBox="0 0 8 5"><path d="M0.8 0.8 L4 4 L7.2 0.8" fill="none" stroke="#333" stroke-width="1.2"/></svg>
<div class="a" style="left:749.7px;top:270px;width:60.00px;height:20.50px;border:1px solid #dee2e6;border-radius:3px;box-sizing:border-box;background:#fff"></div>
<div class="a" style="left:799.2px;top:271px;width:1.00px;height:18.50px;background:#dee2e6"></div>
<div class="a" style="left:800.2px;top:280px;width:8.50px;height:1.00px;background:#e8e8e8"></div>
<svg class="a" style="left:801.5px;top:271.5px;" width="6" height="6" viewBox="0 0 6 6"><path d="M3 0.6 V5.4 M0.6 3 H5.4" stroke="#333" stroke-width="1"/></svg>
<svg class="a" style="left:801.5px;top:281.5px;" width="6" height="6" viewBox="0 0 6 6"><path d="M0.6 3 H5.4" stroke="#333" stroke-width="1"/></svg>
<div class="a" style="left:818px;top:270px;width:45.30px;height:20.50px;border:1px solid #dee2e6;border-radius:3px;box-sizing:border-box;background:#fff"></div>
<svg class="a" style="left:846px;top:278px;" width="8" height="5" viewBox="0 0 8 5"><path d="M0.8 0.8 L4 4 L7.2 0.8" fill="none" stroke="#333" stroke-width="1.2"/></svg>
<div class="t" style="left:753.30px;top:244.00px;font-size:10.2px;color:#222;font-weight:400;;letter-spacing:-0.946px;">91</div>
<div class="t" style="left:753.30px;top:275.00px;font-size:10.2px;color:#222;font-weight:400;;letter-spacing:-0.409px;">190</div>
<div class="t" style="left:824.00px;top:244.00px;font-size:9.6px;color:#222;font-weight:400;">%</div>
<div class="t" style="left:824.00px;top:275.00px;font-size:9.6px;color:#222;font-weight:400;">px</div>
<div class="a" style="left:647.5px;top:305.6px;width:54.70px;height:24.40px;border:1px solid #dee2e6;border-radius:4px;box-sizing:border-box;background:#fff"></div>
<div class="a" style="left:704.5px;top:305.6px;width:58.00px;height:24.40px;border:1px solid #dee2e6;border-radius:4px;box-sizing:border-box;background:#fff"></div>
<svg class="a" style="left:655.2px;top:313.5px;" width="8" height="8" viewBox="0 0 8 8"><path d="M1 1 L7 7 M7 1 L1 7" stroke="#5b6168" stroke-width="2"/></svg>
<svg class="a" style="left:712.5px;top:313.5px;" width="8" height="8" viewBox="0 0 8 8"><path d="M1 1 L7 7 M7 1 L1 7" stroke="#5b6168" stroke-width="2"/></svg>
<div class="t" style="left:665.70px;top:312.00px;font-size:10.9px;color:#6c757d;font-weight:400;">Width</div>
<div class="t" style="left:723.40px;top:312.00px;font-size:10.9px;color:#6c757d;font-weight:400;">Height</div>
<div class="a" style="left:647.5px;top:335.7px;width:25.20px;height:24.30px;border:1px solid #dee2e6;border-radius:4px;box-sizing:border-box;background:#fff"></div>
<svg class="a" style="left:654.5px;top:341.5px;" width="12" height="12" viewBox="0 0 12 12"><path d="M1.5 2.2 H10.5" stroke="#5b6168" stroke-width="1.4"/><path d="M4.5 1.5 V0.8 H7.5 V1.5" fill="none" stroke="#5b6168" stroke-width="1"/><path d="M2.6 3.5 H9.4 L9 11 H3 Z" fill="#5b6168"/><path d="M4.6 5 V9.6 M6 5 V9.6 M7.4 5 V9.6" stroke="#fff" stroke-width="0.6"/></svg>
<div class="a" style="left:638px;top:369.2px;width:260.60px;height:19.60px;background:#3276bd;border-bottom:1px solid #2a68aa;box-sizing:border-box"></div>
<div class="t" style="left:643.70px;top:374.00px;font-size:11.2px;color:#fff;font-weight:400;">Style</div>
<svg class="a" style="left:884px;top:374.5px;" width="5" height="9" viewBox="0 0 5 9"><path d="M0.8 0.8 L4 4.5 L0.8 8.2" fill="none" stroke="#fff" stroke-width="1.6"/></svg>
<div class="a" style="left:638px;top:389.8px;width:260.60px;height:18.90px;background:#3276bd;border-bottom:1px solid #2a68aa;box-sizing:border-box"></div>
<div class="t" style="left:643.70px;top:394.00px;font-size:11.2px;color:#fff;font-weight:400;">Advanced</div>
<svg class="a" style="left:885px;top:397px;" width="8" height="5" viewBox="0 0 8 5"><path d="M0.8 0.8 L4 4 L7.2 0.8" fill="none" stroke="#fff" stroke-width="1.6"/></svg>
<div class="t" style="left:647.60px;top:431.00px;font-size:11.3px;color:#212529;font-weight:400;">Headers/Footer</div>
<div class="a" style="left:655.3px;top:449.2px;width:8.60px;height:8.60px;border:1px solid #dfe2e5;border-radius:2px;box-sizing:border-box"></div>
<div class="t" style="left:669.00px;top:450.00px;font-size:8.8px;color:#212529;font-weight:400;">Column</div>
<div class="t" style="left:669.00px;top:464.00px;font-size:8.8px;color:#212529;font-weight:400;">Headers</div>
<div class="a" style="left:733.7px;top:447.1px;width:13.30px;height:13.30px;background:#bcd7fb;border-radius:3px"></div>
<div class="a" style="left:735.7px;top:449.1px;width:9.30px;height:9.30px;background:#0d6efd;border-radius:2px"></div>
<svg class="a" style="left:737.2px;top:451.1px;" width="7" height="6" viewBox="0 0 7 6"><path d="M0.8 2.8 L2.6 4.6 L5.8 1" fill="none" stroke="#fff" stroke-width="1.3"/></svg>
<div class="t" style="left:750.00px;top:450.00px;font-size:8.8px;color:#212529;font-weight:400;">Row</div>
<div class="t" style="left:750.00px;top:464.00px;font-size:8.8px;color:#212529;font-weight:400;">Headers</div>
<div class="a" style="left:816.4px;top:449.2px;width:8.60px;height:8.60px;border:1px solid #dfe2e5;border-radius:2px;box-sizing:border-box"></div>
<div class="t" style="left:830.60px;top:450.00px;font-size:8.8px;color:#212529;font-weight:400;">Footer Row</div>
<div class="t" style="left:648.30px;top:489.00px;font-size:11.0px;color:#212529;font-weight:400;">Table Caption</div>
<div class="a" style="left:655.3px;top:507.5px;width:8.60px;height:8.60px;border:1px solid #dfe2e5;border-radius:2px;box-sizing:border-box"></div>
<div class="t" style="left:669.00px;top:508.00px;font-size:8.8px;color:#212529;font-weight:400;">Caption</div>
<div class="t" style="left:647.20px;top:533.00px;font-size:11.7px;color:#212529;font-weight:400;">Other Options</div>
<div class="a" style="left:655.3px;top:552.8px;width:8.60px;height:8.60px;border:1px solid #dfe2e5;border-radius:2px;box-sizing:border-box"></div>
<div class="t" style="left:669.00px;top:553.00px;font-size:8.8px;color:#212529;font-weight:400;">Sortable</div>
<div class="a" style="left:655.3px;top:569.3px;width:8.60px;height:8.60px;border:1px solid #dfe2e5;border-radius:2px;box-sizing:border-box"></div>
<div class="t" style="left:669.00px;top:569.00px;font-size:8.8px;color:#212529;font-weight:400;">Row Hover</div>
<div class="a" style="left:736.3px;top:552.8px;width:8.60px;height:8.60px;border:1px solid #dfe2e5;border-radius:2px;box-sizing:border-box"></div>
<div class="t" style="left:749.80px;top:553.00px;font-size:8.8px;color:#212529;font-weight:400;">Striped</div>
<div class="t" style="left:749.80px;top:567.00px;font-size:8.8px;color:#212529;font-weight:400;">Rows</div>
<div class="a" style="left:736.3px;top:583.1px;width:8.60px;height:8.60px;border:1px solid #dfe2e5;border-radius:2px;box-sizing:border-box"></div>
<div class="t" style="left:749.80px;top:583.00px;font-size:8.8px;color:#212529;font-weight:400;">Condensed</div>
<div class="a" style="left:816.9px;top:552.8px;width:8.60px;height:8.60px;border:1px solid #dfe2e5;border-radius:2px;box-sizing:border-box"></div>
<div class="t" style="left:830.20px;top:553.00px;font-size:8.8px;color:#212529;font-weight:400;">Scroll on</div>
<div class="t" style="left:830.20px;top:567.00px;font-size:8.8px;color:#212529;font-weight:400;">small</div>
<div class="t" style="left:830.20px;top:581.00px;font-size:8.8px;color:#212529;font-weight:400;">screens</div>
<svg class="a" style="left:0;top:0" width="900" height="604" viewBox="0 0 900 604"><ellipse cx="759.5" cy="462.2" rx="40.9" ry="27.5" fill="none" stroke="#e3141d" stroke-width="4.6"/><path d="M778.3 112.5 L732.8 75 M733 75 L758.5 77.3 M733 75 L737.8 95.8" fill="none" stroke="#e8141c" stroke-width="3.8" stroke-linecap="round"/></svg>
</body></html>
